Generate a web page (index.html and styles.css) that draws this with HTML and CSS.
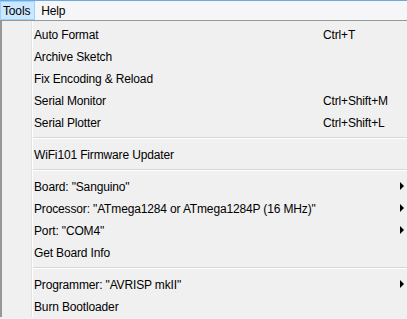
FILE: index.html
```html
<!DOCTYPE html>
<html>
<head>
<meta charset="utf-8">
<link rel="stylesheet" href="styles.css">
</head>
<body>
<div class="menubar">
  <span class="top-item active">Tools</span>
  <span class="top-item">Help</span>
</div>
<div class="popup">
  <div class="item"><span class="label">Auto Format</span><span class="key">Ctrl+T</span></div>
  <div class="item"><span class="label">Archive Sketch</span></div>
  <div class="item"><span class="label">Fix Encoding &amp; Reload</span></div>
  <div class="item"><span class="label">Serial Monitor</span><span class="key">Ctrl+Shift+M</span></div>
  <div class="item"><span class="label">Serial Plotter</span><span class="key">Ctrl+Shift+L</span></div>
  <div class="sep"></div>
  <div class="item"><span class="label">WiFi101 Firmware Updater</span></div>
  <div class="sep"></div>
  <div class="item sub"><span class="label">Board: "Sanguino"</span></div>
  <div class="item sub"><span class="label">Processor: "ATmega1284 or ATmega1284P (16 MHz)"</span></div>
  <div class="item sub"><span class="label">Port: "COM4"</span></div>
  <div class="item"><span class="label">Get Board Info</span></div>
  <div class="sep"></div>
  <div class="item sub"><span class="label">Programmer: "AVRISP mkII"</span></div>
  <div class="item"><span class="label">Burn Bootloader</span></div>
</div>
</body>
</html>
```
FILE: styles.css
```css
html, body {
  margin: 0;
  padding: 0;
  background: #f0f0f0;
  font-family: "Liberation Sans", Arial, sans-serif;
  font-size: 12px;
  letter-spacing: -0.15px;
  color: #000;
  overflow: hidden;
}
.menubar {
  height: 20px;
  display: flex;
  gap: 3px;
  background: #f5f6f7;
  border-top: 1px solid #6fa8dc;
  box-sizing: border-box;
}
.top-item {
  padding: 1px 4px 0 2px;
  line-height: 16px;
  border: 1px solid transparent;
}
.top-item.active {
  background: #cce8ff;
  border-color: #99d1ff;
}
.popup {
  border-top: 1px solid #979797;
  border-left: 2px solid #979797;
  padding-top: 2px;
  background: #f0f0f0;
  position: relative;
}
.popup::before {
  content: "";
  position: absolute;
  left: 29px;
  top: 0;
  bottom: 0;
  border-left: 1px solid #e2e3e3;
  border-right: 1px solid #ffffff;
}
.item {
  height: 22px;
  display: flex;
  align-items: center;
  padding-left: 32px;
  position: relative;
}
.label, .key {
  white-space: nowrap;
  padding-top: 2px;
}
.label {
  flex: 0 0 289px;
}
.sub::after {
  content: "";
  position: absolute;
  left: 398px;
  top: 7px;
  border-left: 4px solid #000;
  border-top: 4px solid transparent;
  border-bottom: 4px solid transparent;
}
.sep {
  height: 10px;
  margin-left: 29px;
  display: flex;
  align-items: center;
}
.sep::before {
  content: "";
  flex: 1;
  height: 0;
  border-top: 1px solid #d7d7d7;
  border-bottom: 1px solid #ffffff;
}
```
